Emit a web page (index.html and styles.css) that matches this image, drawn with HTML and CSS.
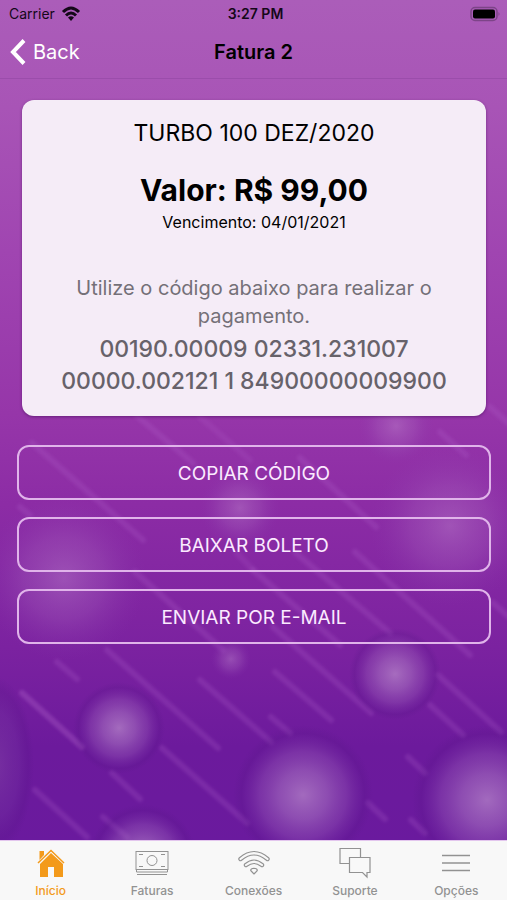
FILE: index.html
```html
<!DOCTYPE html>
<html lang="pt-BR">
<head>
<meta charset="utf-8">
<meta name="viewport" content="width=device-width, initial-scale=1">
<title>Fatura 2</title>
<link rel="stylesheet" href="styles.css">
</head>
<body>
<div class="screen">
  <svg class="backdrop" viewBox="0 0 507 900" preserveAspectRatio="xMidYMid slice" aria-hidden="true">
    <defs>
      <linearGradient id="sky" x1="0" y1="0" x2="0" y2="1">
        <stop offset="0" stop-color="#ab5db9"/>
        <stop offset=".12" stop-color="#a854b6"/>
        <stop offset=".28" stop-color="#a045b1"/>
        <stop offset=".46" stop-color="#9636a9"/>
        <stop offset=".56" stop-color="#8c2ca5"/>
        <stop offset=".72" stop-color="#7b22a0"/>
        <stop offset=".83" stop-color="#6c1a9c"/>
        <stop offset="1" stop-color="#691a9f"/>
      </linearGradient>
      <radialGradient id="orb">
        <stop offset="0" stop-color="#bf93cf" stop-opacity=".66"/>
        <stop offset=".35" stop-color="#b07fc6" stop-opacity=".5"/>
        <stop offset=".62" stop-color="#9a62b8" stop-opacity=".34"/>
        <stop offset=".82" stop-color="#6a2898" stop-opacity=".24"/>
        <stop offset=".88" stop-color="#551585" stop-opacity=".22"/>
        <stop offset="1" stop-color="#551585" stop-opacity="0"/>
      </radialGradient>
      <radialGradient id="haze">
        <stop offset="0" stop-color="#c08bd0" stop-opacity=".42"/>
        <stop offset=".5" stop-color="#a968c0" stop-opacity=".28"/>
        <stop offset="1" stop-color="#8a3aae" stop-opacity="0"/>
      </radialGradient>
      <radialGradient id="shade">
        <stop offset="0" stop-color="#8850a8" stop-opacity=".4"/>
        <stop offset=".6" stop-color="#70359c" stop-opacity=".28"/>
        <stop offset=".85" stop-color="#551585" stop-opacity=".22"/>
        <stop offset="1" stop-color="#551585" stop-opacity="0"/>
      </radialGradient>
      <filter id="soft"><feGaussianBlur stdDeviation="1.4"/></filter>
    </defs>
    <rect width="507" height="900" fill="url(#sky)"/>
    <g filter="url(#soft)" stroke="#b365cf" stroke-opacity=".22" stroke-width="6" stroke-linecap="round" fill="none">
      <path d="M32 443L143 540M137 416L193 463M20 507L30 515M135 572L223 650M253 570L340 645M273 627L371 713M296 553L390 633M355 552L470 655M300 458L376 527M440 432L466 455M490 407L515 429M493 603L515 622"/>
      <path d="M107 650L218 748M57 662L77 679M22 693L82 747M200 680L271 742M162 748L247 823M112 773L140 799M35 790L87 837M103 817L127 837M275 672L331 720M271 717L290 733M438 675L501 732M430 705L463 735M408 757L425 773M368 803L385 819M411 820L425 833"/>
      <path stroke-opacity=".16" d="M200 417L250 460M237 553L253 570M22 693L82 747"/>
    </g>
    <ellipse cx="-4" cy="765" rx="38" ry="88" fill="url(#shade)"/>
    <circle cx="64" cy="578" r="82" fill="url(#haze)"/>
    <circle cx="450" cy="526" r="80" fill="url(#haze)"/>
    <circle cx="240" cy="508" r="40" fill="url(#haze)"/>
    <circle cx="396" cy="426" r="38" fill="url(#haze)"/>
    <circle cx="119" cy="728" r="46" fill="url(#orb)"/>
    <circle cx="231" cy="659" r="20" fill="url(#haze)"/>
    <circle cx="395" cy="674" r="46" fill="url(#orb)"/>
    <circle cx="303" cy="795" r="70" fill="url(#orb)"/>
    <circle cx="487" cy="800" r="75" fill="url(#orb)"/>
    <circle cx="143" cy="858" r="54" fill="url(#orb)"/>
  </svg>

  <header class="top">
    <div class="status">
      <span class="carrier">Carrier
        <svg width="20" height="16" viewBox="0 0 20 16" aria-hidden="true">
          <g fill="none" stroke="#140818" stroke-width="3">
            <path d="M2 6Q10 -2 18 6"/><path d="M5 9.500Q10 4.500 15 9.500"/>
          </g>
          <path d="M7 11.500Q10 9 13 11.500L10 15Z" fill="#140818"/>
        </svg>
      </span>
      <span class="time">3:27 PM</span>
      <span class="battery">
        <svg width="32" height="16" viewBox="0 0 32 16" aria-hidden="true">
          <rect x="1" y="1.500" width="26" height="13" rx="4" fill="none" stroke="#7d4488" stroke-width="1.500"/>
          <rect x="3" y="3.500" width="22" height="9" rx="2" fill="#000"/>
          <path d="M28.500 6Q30.500 8 28.500 10Z" fill="#7d4488"/>
        </svg>
      </span>
    </div>
    <div class="nav">
      <a class="back" href="#">
        <svg width="18" height="28" viewBox="0 0 18 28" aria-hidden="true"><path d="M16 2.500L5 14L16 25.500" fill="none" stroke="#fff" stroke-width="4"/></svg>
        Back
      </a>
      <h1 class="title">Fatura 2</h1>
    </div>
  </header>

  <main class="content">
    <section class="card">
      <h2 class="plan">TURBO 100 DEZ/2020</h2>
      <p class="amount">Valor: R$ 99,00</p>
      <p class="due">Vencimento: 04/01/2021</p>
      <p class="hint">Utilize o código abaixo para realizar o pagamento.</p>
      <p class="code">00190.00009 02331.231007 00000.002121 1 84900000009900</p>
    </section>
    <div class="actions">
      <button class="action" type="button">COPIAR CÓDIGO</button>
      <button class="action" type="button">BAIXAR BOLETO</button>
      <button class="action" type="button">ENVIAR POR E-MAIL</button>
    </div>
  </main>

  <nav class="tabs">
    <a class="tab active" href="#">
      <svg width="36" height="34" viewBox="0 0 36 34" aria-hidden="true">
        <path d="M6.500 5H11V9L6.500 14Z" fill="#f39a1b"/>
        <path d="M5 17L18 4.500L31 17" fill="none" stroke="#f39a1b" stroke-width="1.500"/>
        <path d="M18 7L30 18V31H21V21H15V31H7V18Z" fill="#f39a1b"/>
      </svg>
      <span>Início</span>
    </a>
    <a class="tab" href="#">
      <svg width="36" height="34" viewBox="0 0 36 34" aria-hidden="true">
        <g fill="none" stroke="#929292">
          <rect x="2" y="5.500" width="32" height="18"/>
          <circle cx="18" cy="14.500" r="5"/>
          <path d="M5 8.500H9M27 8.500H31M5 20.500H9M27 20.500H31M2.500 26H33.500M3 28.500H33" />
          <path d="M2.500 23.500V26M33.500 23.500V26"/>
        </g>
      </svg>
      <span>Faturas</span>
    </a>
    <a class="tab" href="#">
      <svg width="36" height="34" viewBox="0 0 36 34" aria-hidden="true">
        <g fill="none" stroke-linecap="round">
          <g stroke="#929292" stroke-width="4.400">
            <path d="M4.500 13Q18 1.500 31.500 13"/><path d="M10 19Q18 12.500 26 19"/>
          </g>
          <g stroke="#f8f8f8" stroke-width="2.200">
            <path d="M4.500 13Q18 1.500 31.500 13"/><path d="M10 19Q18 12.500 26 19"/>
          </g>
          <path d="M18 28L14.700 24.500Q14.500 22.500 18 22.200Q21.500 22.500 21.300 24.500Z" stroke="#929292" stroke-width="1.100" stroke-linejoin="round"/>
        </g>
      </svg>
      <span>Conexões</span>
    </a>
    <a class="tab" href="#">
      <svg width="36" height="34" viewBox="0 0 36 34" aria-hidden="true">
        <g fill="none" stroke="#929292" stroke-width="1.200">
          <path d="M12 17.500H3V2.500H23.500V11"/>
          <path d="M12.500 11.500H33V26.500H30V31L25.500 26.500H12.500Z"/>
        </g>
      </svg>
      <span>Suporte</span>
    </a>
    <a class="tab" href="#">
      <svg width="36" height="34" viewBox="0 0 36 34" aria-hidden="true"><path d="M4 9.500H32M4 17H32M4 24.500H32" fill="none" stroke="#929292" stroke-width="1.300"/></svg>
      <span>Opções</span>
    </a>
  </nav>
</div>
</body>
</html>
```
FILE: styles.css
```css
* {
  box-sizing: border-box;
}

body,
h1,
h2,
p {
  margin: 0;
}

body {
  font-family: Inter, "Liberation Sans", sans-serif;
  color: #000;
}

a {
  text-decoration: none;
}

svg {
  display: block;
  flex-shrink: 0;
}

.screen {
  position: relative;
  isolation: isolate;
  display: flex;
  flex-direction: column;
  min-height: 100vh;
  overflow: hidden;
}

.backdrop {
  position: absolute;
  inset: 0;
  z-index: -1;
  width: 100%;
  height: 100%;
}

.top {
  border-bottom: 1px solid #9b4dab;
}

.status,
.nav {
  display: grid;
  grid-template-columns: 1fr auto 1fr;
  align-items: center;
}

.status {
  height: 27px;
  padding: 0 5px 0 9px;
  font-size: 14px;
  color: #140818;
}

.carrier {
  display: flex;
  align-items: center;
  gap: 6px;
}

.time {
  font-weight: 600;
}

.battery {
  justify-self: end;
}

.nav {
  height: 51px;
  padding: 0 8px 2px;
}

.back {
  display: flex;
  align-items: center;
  gap: 7px;
  font-size: 20px;
  color: #fff;
}

.title {
  font-size: 20px;
  font-weight: 600;
}

.content {
  flex: 1;
  padding: 21px 16px 24px 17px;
}

.card {
  margin: 0 5px;
  padding: 18px 32px 19px;
  border-radius: 12px;
  background: #f5ecf7;
  box-shadow: 0 1px 3px rgba(60, 10, 80, 0.5);
  text-align: center;
}

.plan {
  font-size: 23px;
  line-height: 30px;
  font-weight: 400;
}

.amount {
  margin-top: 22px;
  font-size: 30px;
  line-height: 40px;
  font-weight: 700;
}

.due {
  font-size: 16px;
  line-height: 24px;
}

.hint {
  margin-top: 40px;
  font-size: 20px;
  line-height: 28px;
  color: #747078;
}

.code {
  margin-top: 3px;
  font-size: 23px;
  line-height: 32px;
  font-weight: 500;
  color: #67626a;
}

.actions {
  display: grid;
  gap: 17px;
  margin-top: 29px;
}

.action {
  height: 55px;
  padding: 2px 0 0;
  border: 2px solid #e0b4ea;
  border-radius: 12px;
  background: transparent;
  font-family: inherit;
  font-size: 19px;
  color: #fbeaff;
}

.tabs {
  display: flex;
  height: 60px;
  border-top: 1px solid #e3c6ee;
  background: #f8f8f8;
}

.tab {
  flex: 1 1 0;
  display: flex;
  flex-direction: column;
  align-items: center;
  gap: 2px;
  padding-top: 5px;
  font-size: 12px;
  line-height: 18px;
  font-weight: 500;
  color: #929292;
}

.tab.active {
  color: #f39a1b;
}
```
